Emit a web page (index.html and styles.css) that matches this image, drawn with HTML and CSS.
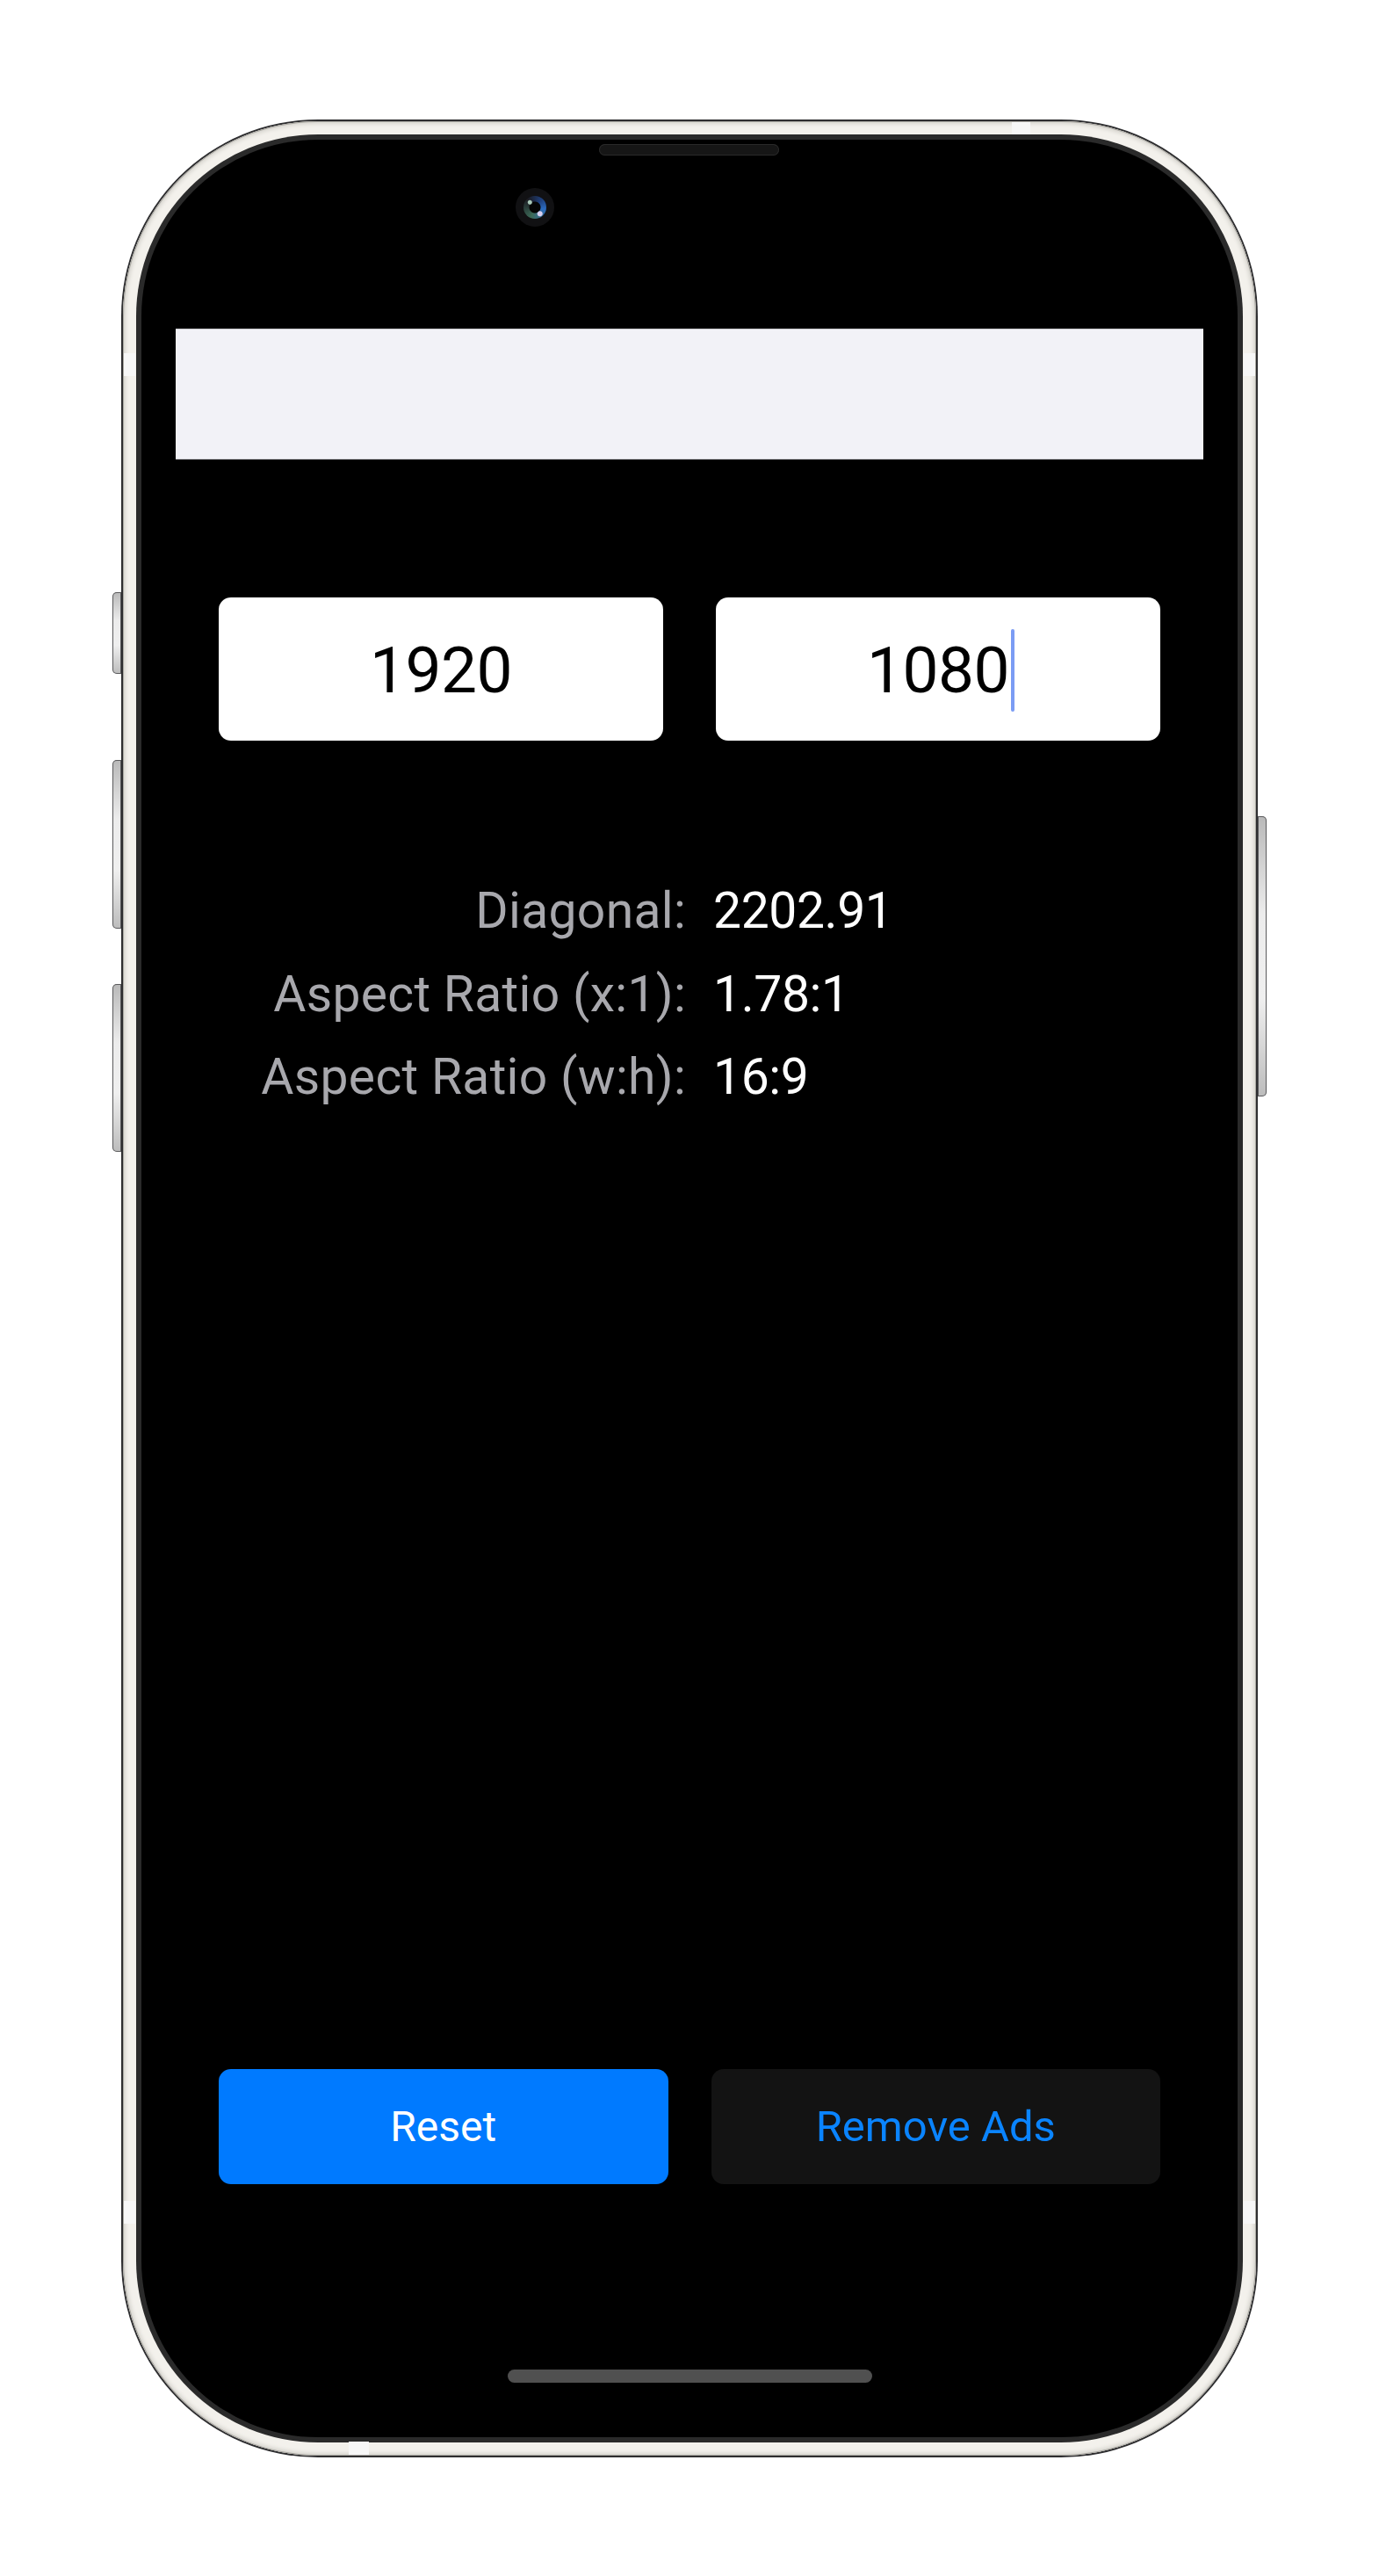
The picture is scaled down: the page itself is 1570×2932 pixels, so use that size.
FILE: index.html
```html
<!DOCTYPE html>
<html lang="en">
<head>
<meta charset="utf-8">
<title>Resolution Calculator</title>
<link rel="stylesheet" href="styles.css">
</head>
<body>
<div class="stage">
  <div class="device">
    <div class="side-btn left b1"></div>
    <div class="side-btn left b2"></div>
    <div class="side-btn left b3"></div>
    <div class="side-btn right b4"></div>
    <div class="antenna top-a"></div>
    <div class="antenna bottom-a"></div>
    <div class="antenna side-a l1"></div>
    <div class="antenna side-a l2"></div>
    <div class="antenna side-a r1"></div>
    <div class="antenna side-a r2"></div>
    <div class="band">
      <div class="bezel">
        <div class="screen">
          <div class="speaker"></div>
          <div class="camera"><div class="lens"></div></div>

          <div class="ad-banner"></div>

          <div class="inputs">
            <div class="field"><span class="value">1920</span></div>
            <div class="field"><span class="value">1080<span class="caret"></span></span></div>
          </div>

          <div class="stats">
            <div class="label">Diagonal:</div><div class="num">2202.91</div>
            <div class="label">Aspect Ratio (x:1):</div><div class="num">1.78:1</div>
            <div class="label">Aspect Ratio (w:h):</div><div class="num">16:9</div>
          </div>

          <div class="actions">
            <div class="btn btn-primary">Reset</div>
            <div class="btn btn-dark">Remove Ads</div>
          </div>

          <div class="home-indicator"></div>
        </div>
      </div>
    </div>
  </div>
</div>
</body>
</html>
```

FILE: styles.css
```css
html, body {
  margin: 0;
  padding: 0;
  background: #ffffff;
}
body {
  width: 1570px;
  height: 2932px;
  overflow: hidden;
  font-family: Roboto, "Liberation Sans", Arial, sans-serif;
}
.stage {
  padding-top: 136px;
  display: flex;
  justify-content: center;
}
.device {
  position: relative;
  width: 1294px;
  height: 2661px;
  border-radius: 224px;
  background: #2e2e30;
  padding: 2px;
  box-sizing: border-box;
}
.band {
  height: 100%;
  border-radius: 222px;
  background: #f3f1ec;
  box-shadow: inset 0 0 0 1px #a9a7a1, inset 0 0 4px 3px #d6d4ce;
  padding: 15px;
  box-sizing: border-box;
}
.bezel {
  height: 100%;
  border-radius: 207px;
  background: #2a2a2a;
  padding: 6px;
  box-sizing: border-box;
}
.screen {
  position: relative;
  height: 100%;
  border-radius: 201px;
  background: #000000;
  display: flex;
  flex-direction: column;
  overflow: hidden;
}

/* hardware */
.side-btn {
  position: absolute;
  width: 10px;
  background: linear-gradient(to bottom, #b9b9b9 0%, #ececec 35%, #efefef 65%, #bcbcbc 100%);
  box-shadow: inset 0 0 0 1px #5a5a5c;
}
.side-btn.left { left: -10px; border-radius: 5px 0 0 5px; }
.side-btn.right { right: -10px; border-radius: 0 5px 5px 0; }
.b1 { top: 538px; height: 93px; }
.b2 { top: 729px; height: 192px; }
.b3 { top: 984px; height: 191px; }
.b4 { top: 793px; height: 319px; }

.antenna {
  position: absolute;
  background: #f7f7f7;
  z-index: 2;
}
.top-a { top: 3px; left: 1014px; width: 21px; height: 14px; }
.bottom-a { bottom: 3px; left: 259px; width: 23px; height: 15px; }
.side-a { width: 13px; height: 26px; }
.l1 { left: 3px; top: 266px; }
.l2 { left: 3px; top: 2369px; }
.r1 { right: 3px; top: 266px; }
.r2 { right: 3px; top: 2369px; }

.speaker {
  position: absolute;
  top: 5px;
  left: 521px;
  width: 205px;
  height: 13px;
  border-radius: 7px;
  background: #161616;
  box-shadow: inset 0 0 0 1px #2a2a2a;
}
.camera {
  position: absolute;
  top: 55px;
  left: 426px;
  width: 44px;
  height: 44px;
  border-radius: 50%;
  background: #111113;
  display: flex;
  align-items: center;
  justify-content: center;
}
.lens {
  width: 26px;
  height: 26px;
  border-radius: 50%;
  background:
    radial-gradient(circle at 72% 78%, #d8d0f0 0 2.5px, transparent 3.5px),
    radial-gradient(circle at 28% 28%, #a8c8b8 0 2px, transparent 3px),
    radial-gradient(circle at 50% 50%, #050505 0 6px, transparent 7px),
    conic-gradient(from 200deg, #3c6a58, #1b1b22 120deg, #1e3f7c 200deg, #2b6bc0 260deg, #3c6a58);
}

/* content */
.ad-banner {
  margin: 215px 39px 0;
  height: 149px;
  background: #f2f2f7;
  border-top: 1px solid #c7c7cc;
  border-bottom: 1px solid #c7c7cc;
  box-sizing: border-box;
}
.inputs {
  margin-top: 157px;
  padding: 0 88px;
  display: flex;
  gap: 60px;
}
.field {
  flex: 1;
  height: 163px;
  background: #ffffff;
  border-radius: 14px;
  display: flex;
  align-items: center;
  justify-content: center;
  padding-top: 3px;
  box-sizing: border-box;
}
.value {
  position: relative;
  font-size: 73px;
  color: #000000;
  letter-spacing: -0.5px;
}
.caret {
  position: absolute;
  left: calc(100% + 2px);
  top: 50%;
  transform: translateY(-50%);
  width: 4px;
  height: 94px;
  border-radius: 2px;
  background: #7b9cf4;
}

.stats {
  margin-top: 147px;
  display: grid;
  grid-template-columns: 620px 1fr;
  column-gap: 31px;
  font-size: 57px;
  line-height: 94.5px;
}
.label {
  text-align: right;
  color: #a8a8ad;
  letter-spacing: 0.3px;
}
.num {
  color: #ffffff;
  letter-spacing: -0.4px;
}

.actions {
  margin-top: auto;
  padding: 0 88px;
  display: flex;
  gap: 49px;
}
.btn {
  flex: 1;
  height: 131px;
  border-radius: 14px;
  display: flex;
  align-items: center;
  justify-content: center;
  font-size: 48px;
}
.btn-primary {
  background: #007aff;
  color: #ffffff;
}
.btn-dark {
  background: #131313;
  color: #0a84ff;
  font-size: 49px;
}
.home-indicator {
  margin: 211px auto 62px;
  width: 415px;
  height: 15px;
  border-radius: 8px;
  background: #505050;
}
```
